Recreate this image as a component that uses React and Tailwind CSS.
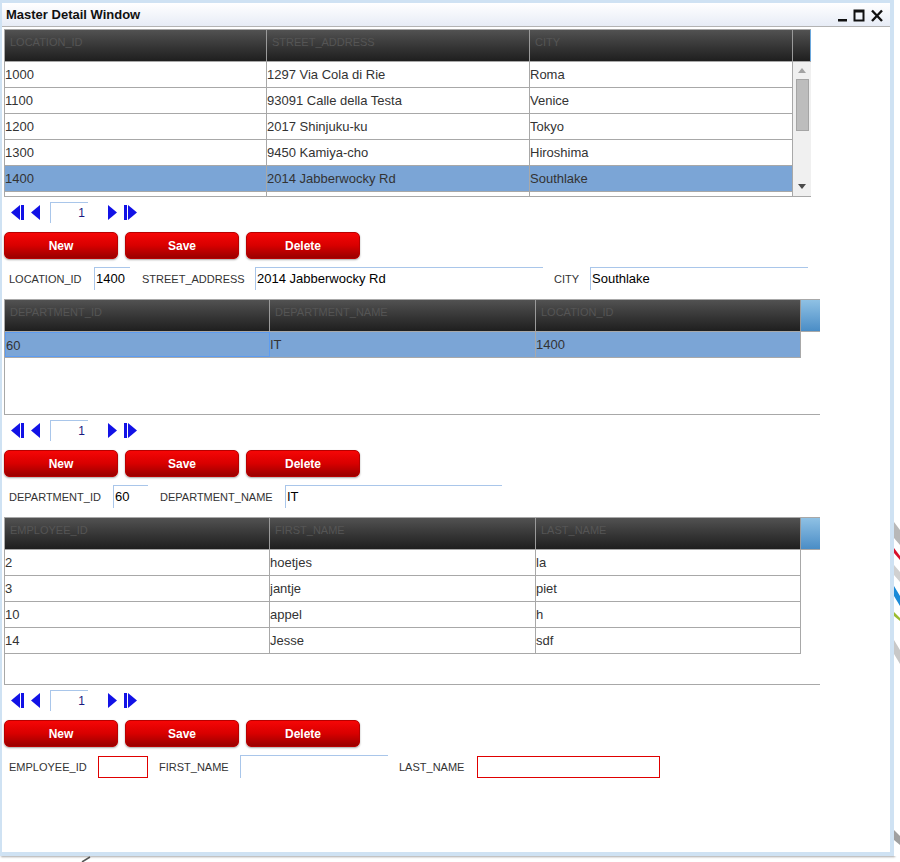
import React from "react";

const BLUE = "#1212e6";

function Pager() {
  return (
    <div className="flex items-center h-[21px] mt-[5px]">
      <svg className="ml-[7px]" width="13" height="15" viewBox="0 0 13 15">
        <polygon points="9,0 9,15 0,7.5" fill={BLUE} />
        <rect x="10" y="0" width="3" height="15" fill={BLUE} />
      </svg>
      <svg className="ml-[7px]" width="9" height="15" viewBox="0 0 9 15">
        <polygon points="9,0 9,15 0,7.5" fill={BLUE} />
      </svg>
      <div className="ml-[10px] w-[38px] h-[21px] border-t border-l border-[#a9c6ea] text-right pr-[3px] text-[12px] leading-[21px] text-[#1a1a80]">
        1
      </div>
      <svg className="ml-[20px]" width="9" height="15" viewBox="0 0 9 15">
        <polygon points="0,0 0,15 9,7.5" fill={BLUE} />
      </svg>
      <svg className="ml-[7px]" width="13" height="15" viewBox="0 0 13 15">
        <rect x="0" y="0" width="3" height="15" fill={BLUE} />
        <polygon points="4,0 4,15 13,7.5" fill={BLUE} />
      </svg>
    </div>
  );
}

function Buttons() {
  return (
    <div className="flex gap-[7px] mt-[9px]">
      {["New", "Save", "Delete"].map((t) => (
        <div
          key={t}
          className="w-[114px] h-[27px] rounded-[5px] bg-gradient-to-b from-[#f60606] via-[#d80000] to-[#9a0000] border border-[#b80000] flex items-center justify-center text-white font-bold text-[12px] shadow-[0_1px_2px_rgba(0,0,0,0.35)]"
        >
          {t}
        </div>
      ))}
    </div>
  );
}

function FormRow({ items }) {
  return (
    <div className="flex items-center h-[23px] mt-[8px]">
      {items.map((it, i) => (
        <React.Fragment key={i}>
          <div
            className="text-[11px] text-[#333333] leading-[23px] pt-[1px] whitespace-nowrap"
            style={{ marginLeft: it.ml, width: it.lw }}
          >
            {it.label}
          </div>
          {it.red ? (
            <div
              className="h-[22px] border border-[#e00000] text-[13px] leading-[20px] text-black pl-[1px]"
              style={{ width: it.iw }}
            >
              {it.value}
            </div>
          ) : (
            <div
              className="h-[23px] border-t border-l border-[#a9c6ea] text-[13px] leading-[22px] text-black pl-[1px]"
              style={{ width: it.iw }}
            >
              {it.value}
            </div>
          )}
        </React.Fragment>
      ))}
    </div>
  );
}

function Grid({ cols, widths, rows, selected, selBorder, bodyH, scroll, extraRow, totalW }) {
  const rowW = widths.reduce((a, b) => a + b, 0);
  return (
    <div className="border-l border-t border-b border-[#a8a8a8] bg-white" style={{ width: totalW }}>
      <div className="flex h-[32px] border-b border-[#a8a8a8] bg-gradient-to-b from-[#525252] to-[#1f1f1f]">
        {cols.map((c, i) => (
          <div
            key={c}
            className="h-full border-r border-[#9a9a9a] text-[11px] text-[#555555] pl-[5px] pt-[6px] leading-[13px]"
            style={{ width: widths[i] }}
          >
            {c}
          </div>
        ))}
        {scroll ? (
          <div className="flex-1 h-full border-r border-[#6aa7dc]" />
        ) : (
          <div className="flex-1 h-full bg-gradient-to-b from-[#8fc1e4] to-[#4a8dc6]" />
        )}
      </div>
      <div className="flex overflow-hidden" style={{ height: bodyH }}>
        <div style={{ width: rowW }} className="shrink-0">
          {rows.map((r, ri) => {
            const sel = ri === selected;
            return (
              <div
                key={ri}
                className={"flex h-[26px] border-b border-[#a8a8a8] " + (sel ? "bg-[#7ba5d6]" : "")}
              >
                {r.map((v, ci) => (
                  <div
                    key={ci}
                    className={
                      "h-full text-[13px] leading-[25px] text-[#333333] whitespace-nowrap overflow-hidden " +
                      (sel && selBorder && ci === 0
                        ? "border border-[#5c9cf2] leading-[23px]"
                        : "border-r border-[#a8a8a8]")
                    }
                    style={{ width: widths[ci] }}
                  >
                    {v}
                  </div>
                ))}
              </div>
            );
          })}
          {extraRow ? (
            <div className="flex h-[26px]">
              {widths.map((w, ci) => (
                <div key={ci} className="h-full border-r border-[#a8a8a8]" style={{ width: w }} />
              ))}
            </div>
          ) : null}
        </div>
        {scroll ? (
          <div className="flex-1 h-full bg-[#f0f0f0] flex flex-col items-center">
            <svg className="mt-[6px]" width="8" height="5" viewBox="0 0 8 5">
              <polygon points="0,5 8,5 4,0" fill="#a3a3a3" />
            </svg>
            <div className="mt-[6px] w-[13px] h-[52px] bg-[#bdbdbd] border border-[#a5a5a5]" />
            <div className="flex-1" />
            <svg className="mb-[7px]" width="8" height="5" viewBox="0 0 8 5">
              <polygon points="0,0 8,0 4,5" fill="#4a4a4a" />
            </svg>
          </div>
        ) : null}
      </div>
    </div>
  );
}

export default function App() {
  return (
    <div className="w-[900px] h-[862px] bg-white overflow-hidden font-['Liberation_Sans',Arial,sans-serif]">
      <div className="flex">
        <div className="w-[894px] h-[856px] bg-[#cfe2f3] pt-[3px] pl-[2px] pr-[4px] pb-[4px] shadow-[1px_1px_2px_rgba(0,0,0,0.35)] shrink-0">
          <div className="bg-white h-full flex flex-col">
            <div className="h-[24px] shrink-0 border-b border-[#b3b3b3] bg-gradient-to-b from-[#ffffff] to-[#e7ecf6] flex items-center">
              <div className="ml-[4px] text-[13px] font-bold text-[#111111]">Master Detail Window</div>
              <div className="flex-1" />
              <svg width="47" height="14" viewBox="0 0 47 14" className="mr-[5px] mt-[2px]">
                <rect x="0" y="10" width="9" height="2.5" fill="#111" />
                <rect x="16.5" y="1.5" width="9" height="10" fill="none" stroke="#111" strokeWidth="2" />
                <rect x="16" y="1" width="10" height="2.5" fill="#111" />
                <path d="M34 1.5 L44 12 M44 1.5 L34 12" stroke="#111" strokeWidth="2.4" />
              </svg>
            </div>
            <div className="px-[2px] pt-[2px] flex flex-col">
              <Grid
                totalW={807}
                cols={["LOCATION_ID", "STREET_ADDRESS", "CITY"]}
                widths={[262, 263, 263]}
                rows={[
                  ["1000", "1297 Via Cola di Rie", "Roma"],
                  ["1100", "93091 Calle della Testa", "Venice"],
                  ["1200", "2017 Shinjuku-ku", "Tokyo"],
                  ["1300", "9450 Kamiya-cho", "Hiroshima"],
                  ["1400", "2014 Jabberwocky Rd", "Southlake"],
                ]}
                selected={4}
                bodyH={134}
                scroll
                extraRow
              />
              <Pager />
              <Buttons />
              <FormRow
                items={[
                  { label: "LOCATION_ID", ml: 5, lw: 85, iw: 36, value: "1400" },
                  { label: "STREET_ADDRESS", ml: 12, lw: 113, iw: 288, value: "2014 Jabberwocky Rd" },
                  { label: "CITY", ml: 11, lw: 36, iw: 218, value: "Southlake" },
                ]}
              />
              <div className="mt-[9px]">
                <Grid
                  totalW={816}
                  cols={["DEPARTMENT_ID", "DEPARTMENT_NAME", "LOCATION_ID"]}
                  widths={[265, 266, 265]}
                  rows={[["60", "IT", "1400"]]}
                  selected={0}
                  selBorder
                  bodyH={82}
                />
              </div>
              <Pager />
              <Buttons />
              <FormRow
                items={[
                  { label: "DEPARTMENT_ID", ml: 5, lw: 104, iw: 35, value: "60" },
                  { label: "DEPARTMENT_NAME", ml: 12, lw: 125, iw: 217, value: "IT" },
                ]}
              />
              <div className="mt-[9px]">
                <Grid
                  totalW={816}
                  cols={["EMPLOYEE_ID", "FIRST_NAME", "LAST_NAME"]}
                  widths={[265, 266, 265]}
                  rows={[
                    ["2", "hoetjes", "la"],
                    ["3", "jantje", "piet"],
                    ["10", "appel", "h"],
                    ["14", "Jesse", "sdf"],
                  ]}
                  selected={-1}
                  bodyH={134}
                />
              </div>
              <Pager />
              <Buttons />
              <FormRow
                items={[
                  { label: "EMPLOYEE_ID", ml: 5, lw: 89, iw: 50, value: "", red: true },
                  { label: "FIRST_NAME", ml: 11, lw: 81, iw: 148, value: "" },
                  { label: "LAST_NAME", ml: 11, lw: 78, iw: 183, value: "", red: true },
                ]}
              />
            </div>
          </div>
        </div>
        <svg width="6" height="856" viewBox="0 0 6 856" className="shrink-0">
          <rect x="0" y="0" width="6" height="856" fill="#ffffff" />
          <polygon points="0,522 6,530 6,545 0,538" fill="#b8b8b8" />
          <polygon points="0,548 6,556 6,560 0,553" fill="#d8102c" />
          <polygon points="0,565 6,572 6,582 0,575" fill="#d0d0d0" />
          <polygon points="0,586 6,596 6,606 0,596" fill="#1a8ad8" />
          <polygon points="0,612 6,618 6,621 0,616" fill="#9bbb30" />
          <polygon points="0,640 6,650 6,664 0,654" fill="#c8c8c8" />
          <polygon points="0,830 6,836 6,845 0,840" fill="#a0a0a0" />
        </svg>
      </div>
      <svg width="900" height="6" viewBox="0 0 900 6" className="block">
        <path d="M82 6 L90 1" stroke="#555" strokeWidth="1.5" />
      </svg>
    </div>
  );
}
